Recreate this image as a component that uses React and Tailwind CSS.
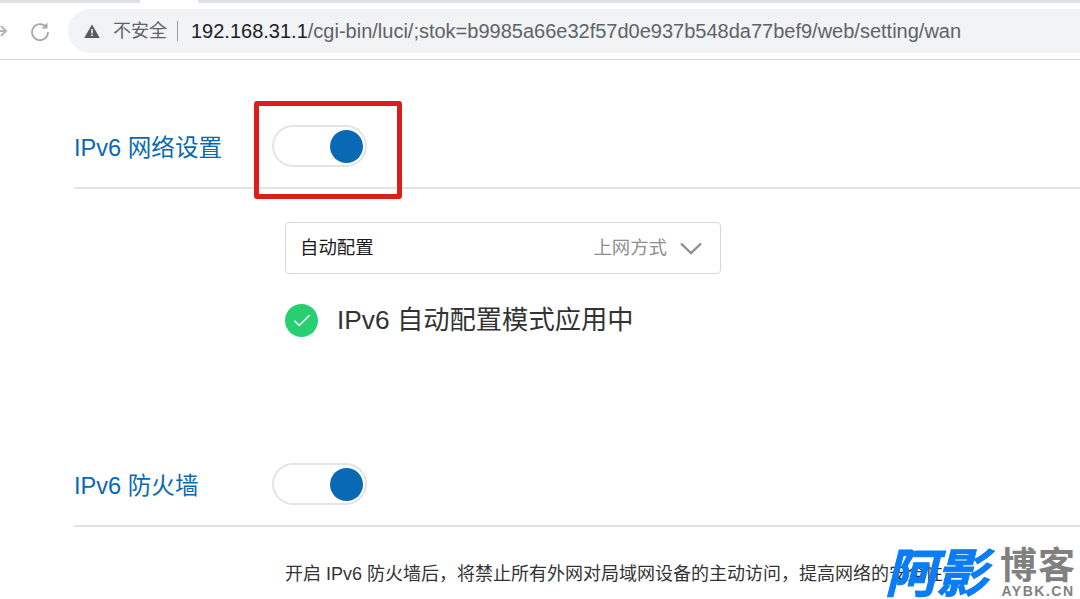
import { Check } from "lucide-react";

const font = { fontFamily: '"Liberation Sans", "Noto Sans CJK SC", sans-serif' };

function Toggle() {
  return (
    <div className="w-[95px] h-[42px] rounded-full border-2 border-[#e4e4e4] bg-white flex items-center justify-end pr-[2.5px] shrink-0">
      <div className="w-[33px] h-[33px] rounded-full bg-[#0a69b5]"></div>
    </div>
  );
}

function BrowserBar() {
  return (
    <div className="h-[60px] border-b border-[#d4d4d4] bg-white">
      {/* Tab strip */}
      <div className="h-[3px] flex">
        <div className="w-[140px] bg-[#dfe1e4]"></div>
        <div className="w-[58px] bg-white"></div>
        <div className="flex-1 bg-[#dfe1e4]"></div>
      </div>
      <div className="flex items-center h-[44px] mt-[6px]">
        <div className="w-[30px] h-full flex items-center">
          <svg width="8" height="14" viewBox="0 0 8 14" fill="none" stroke="#b4b4b4" strokeWidth="2">
            <path d="M-2 7H5M1 2l5 5-5 5" />
          </svg>
        </div>
        <div className="w-[38px] h-full flex items-center">
          <svg width="20" height="20" viewBox="0 0 20 20" fill="none" stroke="#a8a8a8" strokeWidth="1.8">
            <path d="M16.5 6.5A8 8 0 1 0 18 11" />
            <path d="M17.5 1.5v6h-6" fill="#a8a8a8" stroke="none" />
          </svg>
        </div>
        <div className="flex-1 h-full rounded-l-full bg-[#f1f3f4] flex items-center pl-[16px]">
          <svg width="16" height="14" viewBox="0 0 16 14">
            <path d="M8 0.5 L15.8 14 H0.2 Z" fill="#5a5a5a" />
            <rect x="7.2" y="5" width="1.6" height="4.5" fill="#f1f3f4" />
            <rect x="7.2" y="10.5" width="1.6" height="1.6" fill="#f1f3f4" />
          </svg>
          <span className="ml-[13px] text-[18px] text-[#5f6368]">不安全</span>
          <div className="w-px h-[20px] bg-[#9a9a9a] ml-[10px] mr-[13px]"></div>
          <span className="text-[20px] text-[#5f6368] whitespace-nowrap">
            <span className="text-[#202124]">192.168.31.1</span>/cgi-bin/luci/;stok=b9985a66e32f57d0e937b548da77bef9/web/setting/wan
          </span>
        </div>
      </div>
    </div>
  );
}

function Logo() {
  return (
    <div className="absolute left-[885px] top-[549px] flex items-start">
      <span className="w-[115px] mt-[1px] text-[52px] leading-[48px] font-bold italic text-[#0a7cf5] tracking-[-1px] whitespace-nowrap [-webkit-text-stroke:1px_#0a7cf5]">阿影</span>
      <div className="flex flex-col items-center">
        <span className="text-[37px] leading-[35px] font-bold text-[#808080] tracking-[1px] whitespace-nowrap">博客</span>
        <span className="text-[14px] leading-[14px] font-bold text-[#808080] tracking-[1.5px]">AYBK.CN</span>
      </div>
    </div>
  );
}

export default function App() {
  return (
    <div className="relative w-[1080px] h-[599px] bg-white overflow-hidden" style={font}>
      <BrowserBar />

      <div className="pl-[74px]">
        {/* IPv6 network */}
        <div className="h-[129px] border-b-2 border-[#e2e2e2] flex items-end pb-[20px]">
          <span className="w-[198px] mb-[-2px] text-[23.6px] leading-[42px] text-[#0a69b0] whitespace-nowrap">IPv6 网络设置</span>
          <Toggle />
        </div>

        <div className="pl-[211px] pt-[33px]">
          <div className="w-[436px] h-[52px] border border-[#d6d6d6] rounded-[4px] flex items-center pl-[14px] pr-[18px]">
            <span className="text-[18.4px] text-[#1a1a1a]">自动配置</span>
            <span className="ml-auto text-[18.4px] text-[#8f8f8f]">上网方式</span>
            <svg className="ml-[13px]" width="22" height="13" viewBox="0 0 22 13" fill="none" stroke="#8f8f8f" strokeWidth="2.4">
              <path d="M1 1.5 11 11 21 1.5" />
            </svg>
          </div>
          <div className="flex items-center mt-[29px] h-[35px]">
            <div className="w-[33px] h-[33px] rounded-full bg-[#27cf70] flex items-center justify-center">
              <Check className="text-white" size={22} strokeWidth={1.6} />
            </div>
            <span className="ml-[19px] mt-[1px] text-[26.3px] text-[#333333] whitespace-nowrap">IPv6 自动配置模式应用中</span>
          </div>
        </div>

        {/* IPv6 firewall */}
        <div className="mt-[125px] h-[64px] border-b-2 border-[#e2e2e2] flex items-start">
          <span className="w-[198px] mt-[2px] text-[23.6px] leading-[42px] text-[#0a69b0] whitespace-nowrap">IPv6 防火墙</span>
          <Toggle />
        </div>

        <div className="pl-[211px] pt-[35px]">
          <p className="text-[18px] leading-[24px] text-[#333333] whitespace-nowrap">
            开启 IPv6 防火墙后，将禁止所有外网对局域网设备的主动访问，提高网络的安全性
          </p>
        </div>
      </div>

      {/* Red highlight */}
      <div className="absolute left-[254px] top-[101px] w-[148px] h-[98px] border-[5px] border-[#d9201c] rounded-[3px]"></div>

      <Logo />
    </div>
  );
}
